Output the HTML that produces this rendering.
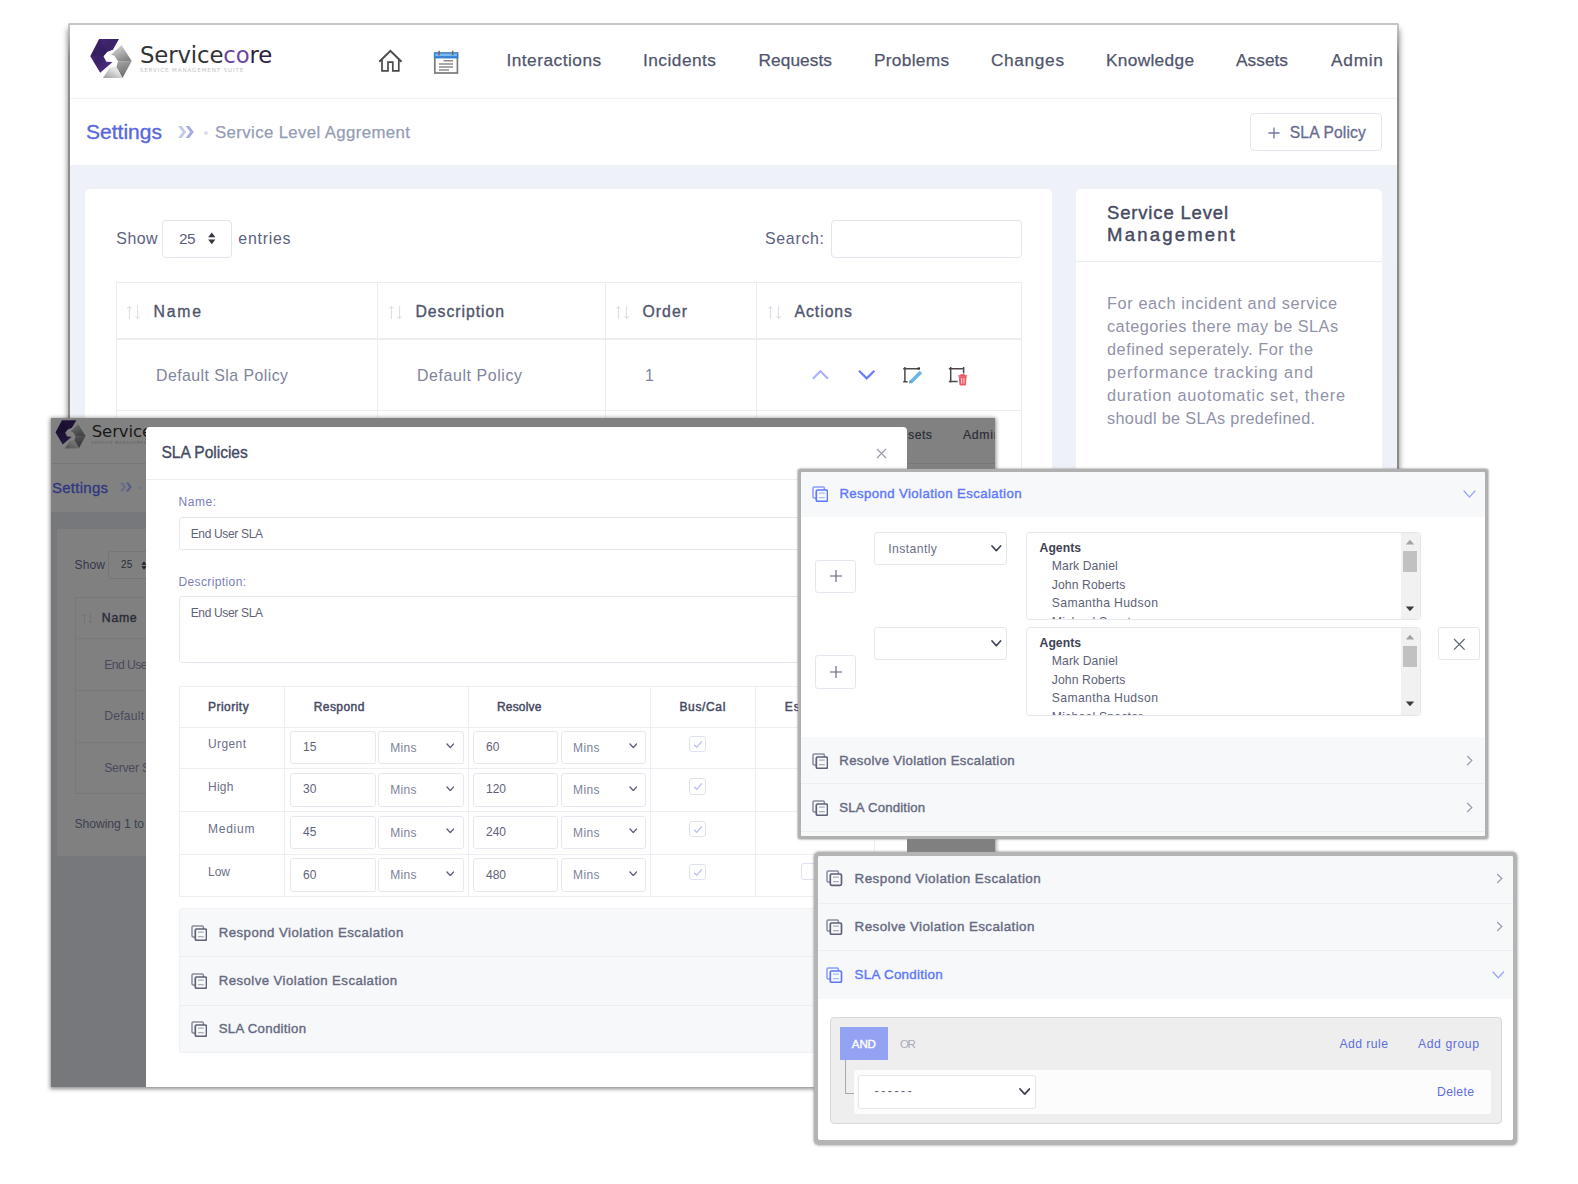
<!DOCTYPE html>
<html lang="en"><head><meta charset="utf-8"><title>Servicecore - SLA Policies</title>
<style>
html,body{margin:0;padding:0;background:#fff;}
body{width:1578px;height:1184px;position:relative;overflow:hidden;font-family:"Liberation Sans",sans-serif;}
#root{position:absolute;left:0;top:0;width:1578px;height:1184px;}
.b{position:absolute;box-sizing:border-box;}
.t{position:absolute;white-space:pre;}
</style></head>
<body>
<div id="root">
<div class="b" style="left:69.3px;top:23.7px;width:1328.5px;height:456.3px;background:#fff;box-shadow:0 6px 6px 1px rgba(0,0,0,.5);"></div>
<div class="b" style="left:68.3px;top:22.7px;width:1330.5px;height:457.3px;background:#c6c6c6;border-radius:1.5px;"></div>
<div class="b" style="left:68.3px;top:24.2px;width:2.0px;height:455.8px;background:linear-gradient(#c6c6c6 0,#8e8e8e 34px,#8a8a8a 100%);"></div>
<div class="b" style="left:1396.8px;top:24.2px;width:2.0px;height:455.8px;background:linear-gradient(#c6c6c6 0,#8e8e8e 34px,#8a8a8a 100%);"></div>
<div class="b" style="left:70px;top:25px;width:1327px;height:455px;background:#fff;overflow:hidden;">
<div class="b" style="left:0.0px;top:73.0px;width:1328.0px;height:1.0px;background:#eef0f6;"></div>
<svg class="b" style="left:14.0px;top:7.0px;width:60.0px;height:52.0px;" viewBox="0 0 60 52"><defs><linearGradient id="lpa" x1="0" y1="0" x2="1" y2="1"><stop offset="0" stop-color="#4a2a80"/><stop offset=".45" stop-color="#3a2266"/><stop offset="1" stop-color="#62389e"/></linearGradient><linearGradient id="lqa" x1="1" y1="0" x2="0" y2="1"><stop offset="0" stop-color="#4b2a80" stop-opacity=".0"/><stop offset="1" stop-color="#4b2a80" stop-opacity="0"/></linearGradient><linearGradient id="lta" x1="0" y1="0" x2=".6" y2="1"><stop offset="0" stop-color="#e4e4e4"/><stop offset="1" stop-color="#858585"/></linearGradient><linearGradient id="lra" x1="0" y1="0" x2=".3" y2="1"><stop offset="0" stop-color="#a6a6a6"/><stop offset="1" stop-color="#6e6e6e"/></linearGradient><linearGradient id="lba" x1="0" y1="1" x2="1" y2="0"><stop offset="0" stop-color="#9c9c9c"/><stop offset=".7" stop-color="#e6e6e6"/><stop offset="1" stop-color="#cfcfcf"/></linearGradient></defs><path d="M15.2 7.1H35L28.9 17.7 23.1 20 19.5 24.3 22.3 29.7 28.6 29.9 16.2 40.8 6.3 24.3z" fill="url(#lpa)"/><path d="M15.2 7.1 23.1 20 19.5 24.3 6.3 24.3z" fill="#2e1a55" opacity=".45"/><path d="M37.5 12.9 47.7 28.9 34 29.3 30.4 23.8 26.9 22.8z" fill="url(#lta)"/><path d="M47.7 28.9 38.5 45.9 32.4 35 34 29.3z" fill="url(#lra)"/><path d="M32.4 35 38.5 45.9 19 46.1 25.9 35.5z" fill="url(#lba)"/></svg>
<span class="t" style="font-family:'DejaVu Sans',sans-serif;left:70.0px;top:19.1px;font-size:22.8px;line-height:22.8px;letter-spacing:-0.14px;color:#333333;">Service<span style="color:#6a45a3">co</span><span style="color:#2b2340">re</span></span>
<span class="t" style="font-family:'DejaVu Sans',sans-serif;left:69.8px;top:43.2px;font-size:5.6px;line-height:5.6px;letter-spacing:0.86px;color:#c4c4c4;">SERVICE MANAGEMENT SUITE</span>
<svg class="b" style="left:308.0px;top:23.5px;width:25.0px;height:24.0px;" viewBox="0 0 25 24"><path d="M4 10.6V21.8h6V13.2h4.8v8.6h6V10.6" fill="none" stroke="#4a4a4a" stroke-width="1.7"/><path d="M1.3 12.8 12.4 1.8l11.1 11" fill="none" stroke="#4a4a4a" stroke-width="2"/></svg>
<svg class="b" style="left:363.0px;top:25.0px;width:26.0px;height:24.0px;" viewBox="0 0 26 24"><rect x="1.8" y="3.2" width="22.6" height="19.8" fill="#fff" stroke="#7a7a7a" stroke-width="1.7"/><rect x="0.9" y="2.4" width="24.4" height="6" fill="#2f7fd0"/><rect x="2.2" y="3.6" width="21.8" height="2.6" fill="#7db8f0"/><path d="M6.1 .8v4.4M19.7 .8v4.4" stroke="#6a6a6a" stroke-width="1.5"/><path d="M10.5 10.8H20M6 14h14M6 16.9h14M6 19.9h10" stroke="#8c8c8c" stroke-width="1.5"/></svg>
<span class="t " style="left:436.4px;top:26.7px;font-size:17.3px;line-height:17.3px;color:#50556e;letter-spacing:0.50px;-webkit-text-stroke:0.25px #50556e;">Interactions</span>
<span class="t " style="left:573.0px;top:26.7px;font-size:17.3px;line-height:17.3px;color:#50556e;letter-spacing:0.48px;-webkit-text-stroke:0.25px #50556e;">Incidents</span>
<span class="t " style="left:688.5px;top:26.7px;font-size:17.3px;line-height:17.3px;color:#50556e;letter-spacing:0.07px;-webkit-text-stroke:0.25px #50556e;">Requests</span>
<span class="t " style="left:804.0px;top:26.7px;font-size:17.3px;line-height:17.3px;color:#50556e;letter-spacing:0.29px;-webkit-text-stroke:0.25px #50556e;">Problems</span>
<span class="t " style="left:921.0px;top:26.7px;font-size:17.3px;line-height:17.3px;color:#50556e;letter-spacing:0.64px;-webkit-text-stroke:0.25px #50556e;">Changes</span>
<span class="t " style="left:1036.0px;top:26.7px;font-size:17.3px;line-height:17.3px;color:#50556e;letter-spacing:0.31px;-webkit-text-stroke:0.25px #50556e;">Knowledge</span>
<span class="t " style="left:1166.0px;top:26.7px;font-size:17.3px;line-height:17.3px;color:#50556e;letter-spacing:0.03px;-webkit-text-stroke:0.25px #50556e;">Assets</span>
<span class="t " style="left:1261.0px;top:26.7px;font-size:17.3px;line-height:17.3px;color:#50556e;letter-spacing:0.75px;-webkit-text-stroke:0.25px #50556e;">Admin</span>
<span class="t " style="left:16.0px;top:96.2px;font-size:21px;line-height:21px;color:#5867dd;letter-spacing:0.02px;-webkit-text-stroke:0.35px #5867dd;">Settings</span>
<svg class="b" style="left:107.0px;top:99.0px;width:18.0px;height:16.0px;" viewBox="0 0 18 16"><path d="M1 2l4.6 6L1 14h3.6l4.6-6-4.6-6z" fill="#c3c9e8"/><path d="M8.6 2l4.6 6-4.6 6h3.6l4.6-6-4.6-6z" fill="#a3abe0"/></svg>
<div class="b" style="left:134.0px;top:105.5px;width:4.0px;height:4.0px;background:#dcdfee;border-radius:2px;"></div>
<span class="t " style="left:145.0px;top:100.2px;font-size:16.8px;line-height:16.8px;color:#959cb6;letter-spacing:0.38px;-webkit-text-stroke:0.25px #959cb6;">Service Level Aggrement</span>
<div class="b" style="left:1180.0px;top:88.0px;width:132.0px;height:38.0px;background:#fff;border:1px solid #e2e5ec;border-radius:4px;"></div>
<svg class="b" style="left:1198.0px;top:101.6px;width:12.0px;height:12.0px;" viewBox="0 0 12 12"><path d="M6 .4v11.2M.4 6h11.2" stroke="#7177a0" stroke-width="1.3" fill="none"/></svg>
<span class="t " style="left:1219.8px;top:99.9px;font-size:15.6px;line-height:15.6px;color:#666c8e;letter-spacing:0.16px;-webkit-text-stroke:0.3px #666c8e;">SLA Policy</span>
<div class="b" style="left:0.0px;top:140.0px;width:1328.0px;height:315.0px;background:#eff1f8;"></div>
<div class="b" style="left:15.0px;top:164.0px;width:967.0px;height:311.0px;background:#fff;border-radius:5px;"></div>
<span class="t " style="left:46.3px;top:205.9px;font-size:15.9px;line-height:15.9px;color:#5c6180;letter-spacing:0.48px;">Show</span>
<div class="b" style="left:92.3px;top:194.8px;width:70.2px;height:37.8px;background:#fff;border:1px solid #e2e5ec;border-radius:4px;"></div>
<span class="t " style="left:109.1px;top:206.0px;font-size:15.4px;line-height:15.4px;color:#5c6180;letter-spacing:-0.62px;">25</span>
<svg class="b" style="left:137.0px;top:207.2px;width:9.5px;height:12.8px;" viewBox="0 0 8 12"><path d="M4 0.5 7.4 5H.6zM4 11.5.6 7h6.8z" fill="#343a40"/></svg>
<span class="t " style="left:168.3px;top:205.9px;font-size:15.9px;line-height:15.9px;color:#5c6180;letter-spacing:0.75px;">entries</span>
<span class="t " style="left:695.0px;top:205.9px;font-size:15.9px;line-height:15.9px;color:#5c6180;letter-spacing:0.71px;">Search:</span>
<div class="b" style="left:761.0px;top:194.8px;width:191.0px;height:37.8px;background:#fff;border:1px solid #e2e5ec;border-radius:4px;"></div>
<div class="b" style="left:46.0px;top:257.0px;width:906.0px;height:218.0px;border:1px solid #ebedf2;"></div>
<div class="b" style="left:46.0px;top:313.0px;width:906.0px;height:2.0px;background:#ebedf2;"></div>
<div class="b" style="left:46.0px;top:385.0px;width:906.0px;height:1.0px;background:#ebedf2;"></div>
<div class="b" style="left:307.0px;top:257.0px;width:1.0px;height:218.0px;background:#ebedf2;"></div>
<div class="b" style="left:535.0px;top:257.0px;width:1.0px;height:218.0px;background:#ebedf2;"></div>
<div class="b" style="left:686.0px;top:257.0px;width:1.0px;height:218.0px;background:#ebedf2;"></div>
<span class="t " style="left:83.5px;top:278.5px;font-size:15.8px;line-height:15.8px;color:#50556e;letter-spacing:1.79px;-webkit-text-stroke:0.35px #50556e;">Name</span>
<svg class="b" style="left:55.5px;top:280.2px;width:16.0px;height:15.0px;" viewBox="0 0 16 15"><path d="M3.4 14V1.4M1.2 3.8 3.4 1.4 5.6 3.8M11.6 1V13.6M9.4 11.2l2.2 2.4 2.2-2.4" fill="none" stroke="#dadce6" stroke-width="1"/></svg>
<span class="t " style="left:345.5px;top:278.5px;font-size:15.8px;line-height:15.8px;color:#50556e;letter-spacing:0.95px;-webkit-text-stroke:0.35px #50556e;">Description</span>
<svg class="b" style="left:317.5px;top:280.2px;width:16.0px;height:15.0px;" viewBox="0 0 16 15"><path d="M3.4 14V1.4M1.2 3.8 3.4 1.4 5.6 3.8M11.6 1V13.6M9.4 11.2l2.2 2.4 2.2-2.4" fill="none" stroke="#dadce6" stroke-width="1"/></svg>
<span class="t " style="left:572.5px;top:278.5px;font-size:15.8px;line-height:15.8px;color:#50556e;letter-spacing:1.03px;-webkit-text-stroke:0.35px #50556e;">Order</span>
<svg class="b" style="left:544.5px;top:280.2px;width:16.0px;height:15.0px;" viewBox="0 0 16 15"><path d="M3.4 14V1.4M1.2 3.8 3.4 1.4 5.6 3.8M11.6 1V13.6M9.4 11.2l2.2 2.4 2.2-2.4" fill="none" stroke="#dadce6" stroke-width="1"/></svg>
<span class="t " style="left:724.5px;top:278.5px;font-size:15.8px;line-height:15.8px;color:#50556e;letter-spacing:0.95px;-webkit-text-stroke:0.35px #50556e;">Actions</span>
<svg class="b" style="left:696.5px;top:280.2px;width:16.0px;height:15.0px;" viewBox="0 0 16 15"><path d="M3.4 14V1.4M1.2 3.8 3.4 1.4 5.6 3.8M11.6 1V13.6M9.4 11.2l2.2 2.4 2.2-2.4" fill="none" stroke="#dadce6" stroke-width="1"/></svg>
<span class="t " style="left:86.0px;top:342.9px;font-size:15.9px;line-height:15.9px;color:#80849c;letter-spacing:0.44px;">Default Sla Policy</span>
<span class="t " style="left:347.0px;top:342.9px;font-size:15.9px;line-height:15.9px;color:#80849c;letter-spacing:0.60px;">Default Policy</span>
<span class="t " style="left:575.0px;top:342.9px;font-size:15.9px;line-height:15.9px;color:#80849c;">1</span>
<svg class="b" style="left:741.0px;top:344.0px;width:19.0px;height:12.0px;" viewBox="0 0 19 12"><path d="M1.8 9.8 9.4 2.2 17 9.8" fill="none" stroke="#a5b1ff" stroke-width="2"/></svg>
<svg class="b" style="left:787.0px;top:344.0px;width:19.0px;height:12.0px;" viewBox="0 0 19 12"><path d="M2 1.8 9.7 9.4 17.4 1.8" fill="none" stroke="#6c7dff" stroke-width="2.3"/></svg>
<svg class="b" style="left:832.0px;top:340.0px;width:22.0px;height:22.0px;" viewBox="0 0 22 22"><path d="M2.9 2V17.4M1.2 3.7H16.8M1.2 16.7H5.6" fill="none" stroke="#4a4a4a" stroke-width="1.5"/><rect x="15.6" y="2.4" width="2.4" height="2.2" fill="#333"/><path d="M18.9 7.1 8.4 17.6" stroke="#6db3e6" stroke-width="3.6" fill="none"/><path d="M9.9 16.4 7 19l.6-3.6z" fill="#4b95d3"/></svg>
<svg class="b" style="left:877.0px;top:340.0px;width:22.0px;height:22.0px;" viewBox="0 0 22 22"><path d="M3.7 2V17.4M1.8 3.7H17.2M16.6 2V8.6M1.8 16.6H10.6" fill="none" stroke="#4a4a4a" stroke-width="1.5"/><path d="M11.2 10.9h9M14 10.6V9.7h3.4v.9" stroke="#e8505a" stroke-width="1.1" fill="none"/><path d="M12.3 11.8l.7 8.2h5.4l.7-8.2z" fill="#f0646c" stroke="#e8505a" stroke-width=".9"/><path d="M14.6 13v5.6M16.9 13v5.6" stroke="#fbd0d2" stroke-width=".9"/></svg>
<div class="b" style="left:1006.0px;top:164.0px;width:306.0px;height:311.0px;background:#fff;border-radius:5px;"></div>
<span class="t " style="left:1037.0px;top:179.0px;font-size:18.5px;line-height:18.5px;color:#464a63;letter-spacing:0.83px;-webkit-text-stroke:0.4px #464a63;">Service Level</span>
<span class="t " style="left:1037.0px;top:201.0px;font-size:18.5px;line-height:18.5px;color:#464a63;letter-spacing:2.22px;-webkit-text-stroke:0.4px #464a63;">Management</span>
<div class="b" style="left:1006.0px;top:236.0px;width:306.0px;height:1.0px;background:#ebedf2;"></div>
<span class="t " style="left:1037.0px;top:269.6px;font-size:16.3px;line-height:16.3px;color:#9193a8;letter-spacing:0.62px;">For each incident and service</span>
<span class="t " style="left:1037.0px;top:292.6px;font-size:16.3px;line-height:16.3px;color:#9193a8;letter-spacing:0.48px;">categories there may be SLAs</span>
<span class="t " style="left:1037.0px;top:315.6px;font-size:16.3px;line-height:16.3px;color:#9193a8;letter-spacing:0.52px;">defined seperately. For the</span>
<span class="t " style="left:1037.0px;top:338.6px;font-size:16.3px;line-height:16.3px;color:#9193a8;letter-spacing:0.93px;">performance tracking and</span>
<span class="t " style="left:1037.0px;top:361.6px;font-size:16.3px;line-height:16.3px;color:#9193a8;letter-spacing:0.78px;">duration auotomatic set, there</span>
<span class="t " style="left:1037.0px;top:384.6px;font-size:16.3px;line-height:16.3px;color:#9193a8;letter-spacing:0.32px;">shoudl be SLAs predefined.</span>
</div>
<div class="b" style="left:51.0px;top:418.0px;width:944.0px;height:669.0px;background:#808080;box-shadow:0 1px 4px 1px rgba(0,0,0,.45);"></div>
<div class="b" style="left:51px;top:418px;width:944px;height:669px;background:#818181;overflow:hidden;">
<div class="b" style="left:0.0px;top:45.0px;width:944.0px;height:1.0px;background:#787878;"></div>
<div class="b" style="left:0.0px;top:94.0px;width:944.0px;height:575.0px;background:#77787c;"></div>
<div class="b" style="left:6.0px;top:111.0px;width:938.0px;height:327.0px;background:#808080;"></div>
<svg class="b" style="left:0.1px;top:-2.9px;width:43.5px;height:37.7px;" viewBox="0 0 60 52"><defs><linearGradient id="lpb" x1="0" y1="0" x2="1" y2="1"><stop offset="0" stop-color="#251540"/><stop offset=".45" stop-color="#1d1133"/><stop offset="1" stop-color="#311c4f"/></linearGradient><linearGradient id="lqb" x1="1" y1="0" x2="0" y2="1"><stop offset="0" stop-color="#251540" stop-opacity=".0"/><stop offset="1" stop-color="#251540" stop-opacity="0"/></linearGradient><linearGradient id="ltb" x1="0" y1="0" x2=".6" y2="1"><stop offset="0" stop-color="#727272"/><stop offset="1" stop-color="#424242"/></linearGradient><linearGradient id="lrb" x1="0" y1="0" x2=".3" y2="1"><stop offset="0" stop-color="#535353"/><stop offset="1" stop-color="#373737"/></linearGradient><linearGradient id="lbb" x1="0" y1="1" x2="1" y2="0"><stop offset="0" stop-color="#4e4e4e"/><stop offset=".7" stop-color="#737373"/><stop offset="1" stop-color="#676767"/></linearGradient></defs><path d="M15.2 7.1H35L28.9 17.7 23.1 20 19.5 24.3 22.3 29.7 28.6 29.9 16.2 40.8 6.3 24.3z" fill="url(#lpb)"/><path d="M15.2 7.1 23.1 20 19.5 24.3 6.3 24.3z" fill="#170d2a" opacity=".45"/><path d="M37.5 12.9 47.7 28.9 34 29.3 30.4 23.8 26.9 22.8z" fill="url(#ltb)"/><path d="M47.7 28.9 38.5 45.9 32.4 35 34 29.3z" fill="url(#lrb)"/><path d="M32.4 35 38.5 45.9 19 46.1 25.9 35.5z" fill="url(#lbb)"/></svg>
<span class="t" style="font-family:'DejaVu Sans',sans-serif;left:40.7px;top:5.8px;font-size:16.53px;line-height:16.53px;letter-spacing:-0.10px;color:#191919;">Service<span style="color:#352251">co</span><span style="color:#151120">re</span></span>
<span class="t" style="font-family:'DejaVu Sans',sans-serif;left:40.6px;top:23.3px;font-size:4.06px;line-height:4.06px;letter-spacing:0.63px;color:#626262;">SERVICE MANAGEMENT SUITE</span>
<span class="t " style="left:1.0px;top:61.7px;font-size:15px;line-height:15px;color:#2f3780;letter-spacing:0.26px;-webkit-text-stroke:0.3px #2f3780;">Settings</span>
<svg class="b" style="left:68.0px;top:63.0px;width:14.0px;height:12.0px;" viewBox="0 0 18 16"><path d="M1 2l4.6 6L1 14h3.6l4.6-6-4.6-6z" fill="#666c8a"/><path d="M8.6 2l4.6 6-4.6 6h3.6l4.6-6-4.6-6z" fill="#565d88"/></svg>
<div class="b" style="left:88.0px;top:68.0px;width:3.0px;height:3.0px;background:#74767f;border-radius:2px;"></div>
<span class="t " style="left:857.0px;top:11.0px;font-size:12.3px;line-height:12.3px;color:#2b2d3a;letter-spacing:0.48px;-webkit-text-stroke:0.2px #2b2d3a;">sets</span>
<span class="t " style="left:912.0px;top:11.0px;font-size:12.3px;line-height:12.3px;color:#2b2d3a;letter-spacing:0.66px;-webkit-text-stroke:0.2px #2b2d3a;">Admin</span>
<span class="t " style="left:23.6px;top:141.1px;font-size:12px;line-height:12px;color:#34374a;letter-spacing:0.12px;">Show</span>
<div class="b" style="left:57.0px;top:133.0px;width:52.0px;height:28.0px;background:#808080;border:1px solid #767676;border-radius:3px;"></div>
<span class="t " style="left:70.0px;top:142.1px;font-size:10px;line-height:10px;color:#2b2d3a;letter-spacing:0.18px;">25</span>
<svg class="b" style="left:90.0px;top:143.0px;width:6.0px;height:9.0px;" viewBox="0 0 8 12"><path d="M4 0.5 7.4 5H.6zM4 11.5.6 7h6.8z" fill="#1c1e22"/></svg>
<div class="b" style="left:23.6px;top:179.0px;width:325.4px;height:196.5px;border:1px solid #787879;"></div>
<div class="b" style="left:23.6px;top:219.5px;width:325.4px;height:1.5px;background:#787879;"></div>
<div class="b" style="left:23.6px;top:272.0px;width:325.4px;height:1.0px;background:#787879;"></div>
<div class="b" style="left:23.6px;top:323.5px;width:325.4px;height:1.0px;background:#787879;"></div>
<svg class="b" style="left:30.6px;top:195.0px;width:11.5px;height:10.8px;" viewBox="0 0 16 15"><path d="M3.4 14V1.4M1.2 3.8 3.4 1.4 5.6 3.8M11.6 1V13.6M9.4 11.2l2.2 2.4 2.2-2.4" fill="none" stroke="#6e7079" stroke-width="1"/></svg>
<span class="t " style="left:50.8px;top:194.2px;font-size:12.3px;line-height:12.3px;color:#2b2d3a;letter-spacing:0.70px;-webkit-text-stroke:0.4px #2b2d3a;">Name</span>
<span class="t " style="left:53.2px;top:241.0px;font-size:12.2px;line-height:12.2px;color:#484a5c;letter-spacing:-0.56px;">End User SLA</span>
<span class="t " style="left:53.2px;top:292.2px;font-size:12.2px;line-height:12.2px;color:#484a5c;letter-spacing:0.21px;">Default Sla Policy</span>
<span class="t " style="left:53.2px;top:344.0px;font-size:12.2px;line-height:12.2px;color:#484a5c;letter-spacing:-0.22px;">Server Sla Policy</span>
<span class="t " style="left:23.6px;top:399.8px;font-size:12.2px;line-height:12.2px;color:#3e4052;letter-spacing:-0.10px;">Showing 1 to 3 of 3 entries</span>
<div class="b" style="left:95.3px;top:8.5px;width:760.7px;height:673.5px;background:#fff;border-radius:4px;"></div>
<span class="t " style="left:110.5px;top:26.7px;font-size:15.6px;line-height:15.6px;color:#464a63;letter-spacing:-0.04px;-webkit-text-stroke:0.35px #464a63;">SLA Policies</span>
<svg class="b" style="left:825.0px;top:30.0px;width:11.0px;height:11.0px;" viewBox="0 0 11 11"><path d="M1 1l9 9M10 1l-9 9" stroke="#9a9cae" stroke-width="1.2" fill="none"/></svg>
<div class="b" style="left:95.3px;top:60.5px;width:760.7px;height:1.0px;background:#ebedf2;"></div>
<span class="t " style="left:127.5px;top:78.2px;font-size:12px;line-height:12px;color:#7a7fb8;letter-spacing:0.54px;">Name:</span>
<div class="b" style="left:127.8px;top:99.0px;width:696.2px;height:33.3px;background:#fff;border:1px solid #e6e8f0;border-radius:3px;"></div>
<span class="t " style="left:139.7px;top:109.5px;font-size:12px;line-height:12px;color:#5f6379;letter-spacing:-0.34px;">End User SLA</span>
<span class="t " style="left:127.5px;top:157.7px;font-size:12px;line-height:12px;color:#7a7fb8;letter-spacing:0.38px;">Description:</span>
<div class="b" style="left:127.8px;top:178.0px;width:696.2px;height:67.0px;background:#fff;border:1px solid #e6e8f0;border-radius:3px;"></div>
<span class="t " style="left:139.7px;top:188.9px;font-size:12px;line-height:12px;color:#5f6379;letter-spacing:-0.34px;">End User SLA</span>
<div class="b" style="left:128.0px;top:267.5px;width:696.0px;height:211.8px;border:1px solid #eeeff5;"></div>
<div class="b" style="left:128.0px;top:308.5px;width:696.0px;height:1.0px;background:#eeeff5;"></div>
<div class="b" style="left:128.0px;top:350.3px;width:696.0px;height:1.0px;background:#eeeff5;"></div>
<div class="b" style="left:128.0px;top:393.0px;width:696.0px;height:1.0px;background:#eeeff5;"></div>
<div class="b" style="left:128.0px;top:435.6px;width:696.0px;height:1.0px;background:#eeeff5;"></div>
<div class="b" style="left:233.0px;top:267.5px;width:1.0px;height:211.5px;background:#eeeff5;"></div>
<div class="b" style="left:416.5px;top:267.5px;width:1.0px;height:211.5px;background:#eeeff5;"></div>
<div class="b" style="left:598.7px;top:267.5px;width:1.0px;height:211.5px;background:#eeeff5;"></div>
<div class="b" style="left:704.0px;top:267.5px;width:1.0px;height:211.5px;background:#eeeff5;"></div>
<span class="t " style="left:157.0px;top:282.7px;font-size:12px;line-height:12px;color:#464a63;letter-spacing:0.47px;-webkit-text-stroke:0.45px #464a63;">Priority</span>
<span class="t " style="left:262.7px;top:282.7px;font-size:12px;line-height:12px;color:#464a63;letter-spacing:0.44px;-webkit-text-stroke:0.45px #464a63;">Respond</span>
<span class="t " style="left:446.0px;top:282.7px;font-size:12px;line-height:12px;color:#464a63;letter-spacing:0.17px;-webkit-text-stroke:0.45px #464a63;">Resolve</span>
<span class="t " style="left:628.4px;top:282.7px;font-size:12px;line-height:12px;color:#464a63;letter-spacing:0.66px;-webkit-text-stroke:0.45px #464a63;">Bus/Cal</span>
<span class="t " style="left:733.7px;top:282.7px;font-size:12px;line-height:12px;color:#464a63;letter-spacing:1.10px;-webkit-text-stroke:0.45px #464a63;">Escalation</span>
<span class="t " style="left:157.0px;top:320.1px;font-size:12px;line-height:12px;color:#6c7087;letter-spacing:0.39px;">Urgent</span>
<div class="b" style="left:239.4px;top:312.7px;width:85.4px;height:33.6px;background:#fff;border:1px solid #e6e8f0;border-radius:3px;"></div>
<span class="t " style="left:252.0px;top:323.0px;font-size:12px;line-height:12px;color:#5f6379;">15</span>
<div class="b" style="left:422.4px;top:312.7px;width:84.9px;height:33.6px;background:#fff;border:1px solid #e6e8f0;border-radius:3px;"></div>
<span class="t " style="left:435.0px;top:323.0px;font-size:12px;line-height:12px;color:#5f6379;">60</span>
<div class="b" style="left:327.4px;top:312.7px;width:86.1px;height:33.6px;background:#fff;border:1px solid #e6e8f0;border-radius:3px;"></div>
<span class="t " style="left:339.2px;top:323.8px;font-size:12px;line-height:12px;color:#7e8299;letter-spacing:0.35px;">Mins</span>
<svg class="b" style="left:394.9px;top:325.2px;width:8.6px;height:5.6px;" viewBox="0 0 8.60 5.63"><path d="M1 1 4.30 4.63 7.60 1" fill="none" stroke="#5e6278" stroke-width="1.4" stroke-linecap="round" stroke-linejoin="round"/></svg>
<div class="b" style="left:510.3px;top:312.7px;width:85.2px;height:33.6px;background:#fff;border:1px solid #e6e8f0;border-radius:3px;"></div>
<span class="t " style="left:522.1px;top:323.8px;font-size:12px;line-height:12px;color:#7e8299;letter-spacing:0.35px;">Mins</span>
<svg class="b" style="left:577.8px;top:325.2px;width:8.6px;height:5.6px;" viewBox="0 0 8.60 5.63"><path d="M1 1 4.30 4.63 7.60 1" fill="none" stroke="#5e6278" stroke-width="1.4" stroke-linecap="round" stroke-linejoin="round"/></svg>
<div class="b" style="left:638.2px;top:318.1px;width:16.4px;height:16.4px;background:#fff;border:1px solid #dfe2ee;border-radius:3px;"></div>
<svg class="b" style="left:641.5px;top:322.1px;width:10.0px;height:9.0px;" viewBox="0 0 10 9"><path d="M1.2 4.8 3.8 7.4 8.8 1.4" fill="none" stroke="#b6c0f0" stroke-width="1.3"/></svg>
<span class="t " style="left:157.0px;top:362.6px;font-size:12px;line-height:12px;color:#6c7087;letter-spacing:0.24px;">High</span>
<div class="b" style="left:239.4px;top:355.0px;width:85.4px;height:33.6px;background:#fff;border:1px solid #e6e8f0;border-radius:3px;"></div>
<span class="t " style="left:252.0px;top:365.3px;font-size:12px;line-height:12px;color:#5f6379;">30</span>
<div class="b" style="left:422.4px;top:355.0px;width:84.9px;height:33.6px;background:#fff;border:1px solid #e6e8f0;border-radius:3px;"></div>
<span class="t " style="left:435.0px;top:365.3px;font-size:12px;line-height:12px;color:#5f6379;">120</span>
<div class="b" style="left:327.4px;top:355.0px;width:86.1px;height:33.6px;background:#fff;border:1px solid #e6e8f0;border-radius:3px;"></div>
<span class="t " style="left:339.2px;top:366.1px;font-size:12px;line-height:12px;color:#7e8299;letter-spacing:0.35px;">Mins</span>
<svg class="b" style="left:394.9px;top:367.5px;width:8.6px;height:5.6px;" viewBox="0 0 8.60 5.63"><path d="M1 1 4.30 4.63 7.60 1" fill="none" stroke="#5e6278" stroke-width="1.4" stroke-linecap="round" stroke-linejoin="round"/></svg>
<div class="b" style="left:510.3px;top:355.0px;width:85.2px;height:33.6px;background:#fff;border:1px solid #e6e8f0;border-radius:3px;"></div>
<span class="t " style="left:522.1px;top:366.1px;font-size:12px;line-height:12px;color:#7e8299;letter-spacing:0.35px;">Mins</span>
<svg class="b" style="left:577.8px;top:367.5px;width:8.6px;height:5.6px;" viewBox="0 0 8.60 5.63"><path d="M1 1 4.30 4.63 7.60 1" fill="none" stroke="#5e6278" stroke-width="1.4" stroke-linecap="round" stroke-linejoin="round"/></svg>
<div class="b" style="left:638.2px;top:360.4px;width:16.4px;height:16.4px;background:#fff;border:1px solid #dfe2ee;border-radius:3px;"></div>
<svg class="b" style="left:641.5px;top:364.4px;width:10.0px;height:9.0px;" viewBox="0 0 10 9"><path d="M1.2 4.8 3.8 7.4 8.8 1.4" fill="none" stroke="#b6c0f0" stroke-width="1.3"/></svg>
<span class="t " style="left:157.0px;top:405.0px;font-size:12px;line-height:12px;color:#6c7087;letter-spacing:0.74px;">Medium</span>
<div class="b" style="left:239.4px;top:397.6px;width:85.4px;height:33.6px;background:#fff;border:1px solid #e6e8f0;border-radius:3px;"></div>
<span class="t " style="left:252.0px;top:407.9px;font-size:12px;line-height:12px;color:#5f6379;">45</span>
<div class="b" style="left:422.4px;top:397.6px;width:84.9px;height:33.6px;background:#fff;border:1px solid #e6e8f0;border-radius:3px;"></div>
<span class="t " style="left:435.0px;top:407.9px;font-size:12px;line-height:12px;color:#5f6379;">240</span>
<div class="b" style="left:327.4px;top:397.6px;width:86.1px;height:33.6px;background:#fff;border:1px solid #e6e8f0;border-radius:3px;"></div>
<span class="t " style="left:339.2px;top:408.7px;font-size:12px;line-height:12px;color:#7e8299;letter-spacing:0.35px;">Mins</span>
<svg class="b" style="left:394.9px;top:410.1px;width:8.6px;height:5.6px;" viewBox="0 0 8.60 5.63"><path d="M1 1 4.30 4.63 7.60 1" fill="none" stroke="#5e6278" stroke-width="1.4" stroke-linecap="round" stroke-linejoin="round"/></svg>
<div class="b" style="left:510.3px;top:397.6px;width:85.2px;height:33.6px;background:#fff;border:1px solid #e6e8f0;border-radius:3px;"></div>
<span class="t " style="left:522.1px;top:408.7px;font-size:12px;line-height:12px;color:#7e8299;letter-spacing:0.35px;">Mins</span>
<svg class="b" style="left:577.8px;top:410.1px;width:8.6px;height:5.6px;" viewBox="0 0 8.60 5.63"><path d="M1 1 4.30 4.63 7.60 1" fill="none" stroke="#5e6278" stroke-width="1.4" stroke-linecap="round" stroke-linejoin="round"/></svg>
<div class="b" style="left:638.2px;top:403.0px;width:16.4px;height:16.4px;background:#fff;border:1px solid #dfe2ee;border-radius:3px;"></div>
<svg class="b" style="left:641.5px;top:407.0px;width:10.0px;height:9.0px;" viewBox="0 0 10 9"><path d="M1.2 4.8 3.8 7.4 8.8 1.4" fill="none" stroke="#b6c0f0" stroke-width="1.3"/></svg>
<span class="t " style="left:157.0px;top:447.5px;font-size:12px;line-height:12px;color:#6c7087;letter-spacing:-0.01px;">Low</span>
<div class="b" style="left:239.4px;top:440.2px;width:85.4px;height:33.6px;background:#fff;border:1px solid #e6e8f0;border-radius:3px;"></div>
<span class="t " style="left:252.0px;top:450.5px;font-size:12px;line-height:12px;color:#5f6379;">60</span>
<div class="b" style="left:422.4px;top:440.2px;width:84.9px;height:33.6px;background:#fff;border:1px solid #e6e8f0;border-radius:3px;"></div>
<span class="t " style="left:435.0px;top:450.5px;font-size:12px;line-height:12px;color:#5f6379;">480</span>
<div class="b" style="left:327.4px;top:440.2px;width:86.1px;height:33.6px;background:#fff;border:1px solid #e6e8f0;border-radius:3px;"></div>
<span class="t " style="left:339.2px;top:451.3px;font-size:12px;line-height:12px;color:#7e8299;letter-spacing:0.35px;">Mins</span>
<svg class="b" style="left:394.9px;top:452.7px;width:8.6px;height:5.6px;" viewBox="0 0 8.60 5.63"><path d="M1 1 4.30 4.63 7.60 1" fill="none" stroke="#5e6278" stroke-width="1.4" stroke-linecap="round" stroke-linejoin="round"/></svg>
<div class="b" style="left:510.3px;top:440.2px;width:85.2px;height:33.6px;background:#fff;border:1px solid #e6e8f0;border-radius:3px;"></div>
<span class="t " style="left:522.1px;top:451.3px;font-size:12px;line-height:12px;color:#7e8299;letter-spacing:0.35px;">Mins</span>
<svg class="b" style="left:577.8px;top:452.7px;width:8.6px;height:5.6px;" viewBox="0 0 8.60 5.63"><path d="M1 1 4.30 4.63 7.60 1" fill="none" stroke="#5e6278" stroke-width="1.4" stroke-linecap="round" stroke-linejoin="round"/></svg>
<div class="b" style="left:638.2px;top:445.6px;width:16.4px;height:16.4px;background:#fff;border:1px solid #dfe2ee;border-radius:3px;"></div>
<svg class="b" style="left:641.5px;top:449.6px;width:10.0px;height:9.0px;" viewBox="0 0 10 9"><path d="M1.2 4.8 3.8 7.4 8.8 1.4" fill="none" stroke="#b6c0f0" stroke-width="1.3"/></svg>
<div class="b" style="left:750.4px;top:445.3px;width:16.6px;height:16.4px;background:#fff;border:1px solid #dfe2ee;border-radius:3px;"></div>
<div class="b" style="left:128.0px;top:490.0px;width:696.0px;height:144.5px;background:#f7f8fa;border:1px solid #f0f1f5;border-radius:3px;"></div>
<div class="b" style="left:128.0px;top:538.3px;width:696.0px;height:1.0px;background:#eceef3;"></div>
<div class="b" style="left:128.0px;top:586.5px;width:696.0px;height:1.0px;background:#eceef3;"></div>
<svg class="b" style="left:139.7px;top:506.6px;width:16.4px;height:16.4px;" viewBox="0 0 16.4 16.4"><rect x="1" y="1" width="11.4" height="11" rx="1.2" fill="none" stroke="#5e6278" stroke-width="1.5" opacity=".72"/><rect x="4.3" y="4" width="11.2" height="11.3" rx="1.3" fill="#f7f8fa" stroke="#5e6278" stroke-width="1.7"/><path d="M7 7.1h5.8M7 11.7h5.8" stroke="#5e6278" stroke-width="1.3" opacity=".5" fill="none"/></svg>
<span class="t " style="left:167.7px;top:508.2px;font-size:13.2px;line-height:13.2px;color:#676b82;letter-spacing:0.49px;-webkit-text-stroke:0.4px #676b82;">Respond Violation Escalation</span>
<svg class="b" style="left:139.7px;top:554.6px;width:16.4px;height:16.4px;" viewBox="0 0 16.4 16.4"><rect x="1" y="1" width="11.4" height="11" rx="1.2" fill="none" stroke="#5e6278" stroke-width="1.5" opacity=".72"/><rect x="4.3" y="4" width="11.2" height="11.3" rx="1.3" fill="#f7f8fa" stroke="#5e6278" stroke-width="1.7"/><path d="M7 7.1h5.8M7 11.7h5.8" stroke="#5e6278" stroke-width="1.3" opacity=".5" fill="none"/></svg>
<span class="t " style="left:167.7px;top:556.2px;font-size:13.2px;line-height:13.2px;color:#676b82;letter-spacing:0.45px;-webkit-text-stroke:0.4px #676b82;">Resolve Violation Escalation</span>
<svg class="b" style="left:139.7px;top:602.6px;width:16.4px;height:16.4px;" viewBox="0 0 16.4 16.4"><rect x="1" y="1" width="11.4" height="11" rx="1.2" fill="none" stroke="#5e6278" stroke-width="1.5" opacity=".72"/><rect x="4.3" y="4" width="11.2" height="11.3" rx="1.3" fill="#f7f8fa" stroke="#5e6278" stroke-width="1.7"/><path d="M7 7.1h5.8M7 11.7h5.8" stroke="#5e6278" stroke-width="1.3" opacity=".5" fill="none"/></svg>
<span class="t " style="left:167.7px;top:604.2px;font-size:13.2px;line-height:13.2px;color:#676b82;letter-spacing:0.31px;-webkit-text-stroke:0.4px #676b82;">SLA Condition</span>
</div>
<div class="b" style="left:798.0px;top:469.0px;width:690.0px;height:370.0px;background:#b0b0b0;border-radius:3px;box-shadow:0 0 1.5px .5px rgba(130,130,130,.45);"></div>
<div class="b" style="left:801px;top:472px;width:684px;height:364px;background:#fff;overflow:hidden;border-radius:1.5px;">
<div class="b" style="left:-1.0px;top:-1.0px;width:686.0px;height:46.0px;background:#f7f8fa;"></div>
<svg class="b" style="left:10.8px;top:13.9px;width:16.4px;height:16.4px;" viewBox="0 0 16.4 16.4"><rect x="1" y="1" width="11.4" height="11" rx="1.2" fill="none" stroke="#5d78ff" stroke-width="1.5" opacity=".72"/><rect x="4.3" y="4" width="11.2" height="11.3" rx="1.3" fill="#f7f8fa" stroke="#5d78ff" stroke-width="1.7"/><path d="M7 7.1h5.8M7 11.7h5.8" stroke="#5d78ff" stroke-width="1.3" opacity=".5" fill="none"/></svg>
<span class="t " style="left:38.4px;top:14.7px;font-size:13.2px;line-height:13.2px;color:#5d78ff;letter-spacing:0.40px;-webkit-text-stroke:0.4px #5d78ff;">Respond Violation Escalation</span>
<svg class="b" style="left:661.5px;top:17.5px;width:13.0px;height:8.1px;" viewBox="0 0 13.00 8.05"><path d="M1 1 6.50 7.05 12.00 1" fill="none" stroke="#8fa2ff" stroke-width="1.2" stroke-linecap="round" stroke-linejoin="round"/></svg>
<div class="b" style="left:14.3px;top:88.0px;width:41.0px;height:32.5px;background:#fff;border:1px solid #e5e7ef;border-radius:3px;"></div>
<svg class="b" style="left:27.6px;top:97.4px;width:14.0px;height:14.0px;" viewBox="0 0 14 14"><path d="M7 1v12M1 7h12" stroke="#5e6278" stroke-width="1.1" fill="none"/></svg>
<div class="b" style="left:72.6px;top:60.2px;width:133.8px;height:32.4px;background:#fff;border:1px solid #e5e7ef;border-radius:3px;"></div>
<span class="t " style="left:87.3px;top:70.8px;font-size:12.2px;line-height:12.2px;color:#6c7087;letter-spacing:0.41px;">Instantly</span>
<svg class="b" style="left:190.4px;top:73.3px;width:10.6px;height:6.7px;" viewBox="0 0 10.60 6.73"><path d="M1 1 5.30 5.73 9.60 1" fill="none" stroke="#3f4254" stroke-width="1.7" stroke-linecap="round" stroke-linejoin="round"/></svg>
<div class="b" style="left:224.7px;top:60.2px;width:394.9px;height:88.0px;background:#fff;border:1px solid #e5e7ef;border-radius:4px;"></div>
<div class="b" style="left:225.7px;top:61.2px;width:393px;height:86.0px;overflow:hidden;border-radius:3px;">
<span class="t " style="left:12.9px;top:8.8px;font-size:12.2px;line-height:12.2px;color:#3f4254;letter-spacing:0.02px;font-weight:700;">Agents</span>
<span class="t " style="left:25.1px;top:27.2px;font-size:12.2px;line-height:12.2px;color:#5e6278;letter-spacing:0.09px;">Mark Daniel</span>
<span class="t " style="left:25.1px;top:45.6px;font-size:12.2px;line-height:12.2px;color:#5e6278;letter-spacing:0.09px;">John Roberts</span>
<span class="t " style="left:25.1px;top:64.0px;font-size:12.2px;line-height:12.2px;color:#5e6278;letter-spacing:0.37px;">Samantha Hudson</span>
<span class="t " style="left:25.1px;top:82.4px;font-size:12.2px;line-height:12.2px;color:#5e6278;letter-spacing:0.22px;">Michael Spector</span>
<div class="b" style="left:374.8px;top:0.0px;width:18.2px;height:86.0px;background:#f1f1f1;"></div>
<div class="b" style="left:376.6px;top:18.3px;width:14.2px;height:20.3px;background:#c1c1c1;"></div>
<svg class="b" style="left:378.8px;top:6.3px;width:10.0px;height:6.0px;" viewBox="0 0 10 6"><path d="M5 .8 9.2 5.4H.8z" fill="#a3a3a3"/></svg>
<svg class="b" style="left:378.8px;top:73.3px;width:10.0px;height:6.0px;" viewBox="0 0 10 6"><path d="M5 5.2 9.2.6H.8z" fill="#3c3c3c"/></svg>
</div>
<div class="b" style="left:14.3px;top:183.0px;width:41.0px;height:33.5px;background:#fff;border:1px solid #e5e7ef;border-radius:3px;"></div>
<svg class="b" style="left:27.6px;top:192.8px;width:14.0px;height:14.0px;" viewBox="0 0 14 14"><path d="M7 1v12M1 7h12" stroke="#5e6278" stroke-width="1.1" fill="none"/></svg>
<div class="b" style="left:72.6px;top:155.2px;width:133.8px;height:32.4px;background:#fff;border:1px solid #e5e7ef;border-radius:3px;"></div>
<svg class="b" style="left:190.4px;top:168.3px;width:10.6px;height:6.7px;" viewBox="0 0 10.60 6.73"><path d="M1 1 5.30 5.73 9.60 1" fill="none" stroke="#3f4254" stroke-width="1.7" stroke-linecap="round" stroke-linejoin="round"/></svg>
<div class="b" style="left:224.7px;top:155.2px;width:394.9px;height:88.8px;background:#fff;border:1px solid #e5e7ef;border-radius:4px;"></div>
<div class="b" style="left:225.7px;top:156.2px;width:393px;height:86.8px;overflow:hidden;border-radius:3px;">
<span class="t " style="left:12.9px;top:8.9px;font-size:12.2px;line-height:12.2px;color:#3f4254;letter-spacing:0.02px;font-weight:700;">Agents</span>
<span class="t " style="left:25.1px;top:27.3px;font-size:12.2px;line-height:12.2px;color:#5e6278;letter-spacing:0.09px;">Mark Daniel</span>
<span class="t " style="left:25.1px;top:45.7px;font-size:12.2px;line-height:12.2px;color:#5e6278;letter-spacing:0.09px;">John Roberts</span>
<span class="t " style="left:25.1px;top:64.1px;font-size:12.2px;line-height:12.2px;color:#5e6278;letter-spacing:0.37px;">Samantha Hudson</span>
<span class="t " style="left:25.1px;top:82.5px;font-size:12.2px;line-height:12.2px;color:#5e6278;letter-spacing:0.22px;">Michael Spector</span>
<div class="b" style="left:374.8px;top:0.0px;width:18.2px;height:86.8px;background:#f1f1f1;"></div>
<div class="b" style="left:376.6px;top:18.3px;width:14.2px;height:20.3px;background:#c1c1c1;"></div>
<svg class="b" style="left:378.8px;top:6.3px;width:10.0px;height:6.0px;" viewBox="0 0 10 6"><path d="M5 .8 9.2 5.4H.8z" fill="#a3a3a3"/></svg>
<svg class="b" style="left:378.8px;top:73.3px;width:10.0px;height:6.0px;" viewBox="0 0 10 6"><path d="M5 5.2 9.2.6H.8z" fill="#3c3c3c"/></svg>
</div>
<div class="b" style="left:637.0px;top:155.2px;width:41.6px;height:33.0px;background:#fff;border:1px solid #e5e7ef;border-radius:3px;"></div>
<svg class="b" style="left:651.6px;top:165.5px;width:12.6px;height:12.6px;" viewBox="0 0 12.6 12.6"><path d="M1 1l10.6 10.6M11.6 1 1 11.6" stroke="#5e6278" stroke-width="1.2" fill="none"/></svg>
<div class="b" style="left:-1.0px;top:264.5px;width:686.0px;height:100.5px;background:#f7f8fa;"></div>
<div class="b" style="left:-1.0px;top:311.2px;width:686.0px;height:1.0px;background:#eceef3;"></div>
<div class="b" style="left:-1.0px;top:359.0px;width:686.0px;height:1.0px;background:#eceef3;"></div>
<svg class="b" style="left:10.9px;top:280.6px;width:16.4px;height:16.4px;" viewBox="0 0 16.4 16.4"><rect x="1" y="1" width="11.4" height="11" rx="1.2" fill="none" stroke="#5e6278" stroke-width="1.5" opacity=".72"/><rect x="4.3" y="4" width="11.2" height="11.3" rx="1.3" fill="#f7f8fa" stroke="#5e6278" stroke-width="1.7"/><path d="M7 7.1h5.8M7 11.7h5.8" stroke="#5e6278" stroke-width="1.3" opacity=".5" fill="none"/></svg>
<span class="t " style="left:38.3px;top:281.9px;font-size:13.2px;line-height:13.2px;color:#676b82;letter-spacing:0.34px;-webkit-text-stroke:0.4px #676b82;">Resolve Violation Escalation</span>
<svg class="b" style="left:664.5px;top:282.8px;width:7.0px;height:11.0px;" viewBox="0 0 7 11"><path d="M1.2 1 5.8 5.5 1.2 10" fill="none" stroke="#9a9cae" stroke-width="1.2"/></svg>
<svg class="b" style="left:10.9px;top:327.5px;width:16.4px;height:16.4px;" viewBox="0 0 16.4 16.4"><rect x="1" y="1" width="11.4" height="11" rx="1.2" fill="none" stroke="#5e6278" stroke-width="1.5" opacity=".72"/><rect x="4.3" y="4" width="11.2" height="11.3" rx="1.3" fill="#f7f8fa" stroke="#5e6278" stroke-width="1.7"/><path d="M7 7.1h5.8M7 11.7h5.8" stroke="#5e6278" stroke-width="1.3" opacity=".5" fill="none"/></svg>
<span class="t " style="left:38.3px;top:328.8px;font-size:13.2px;line-height:13.2px;color:#676b82;letter-spacing:0.19px;-webkit-text-stroke:0.4px #676b82;">SLA Condition</span>
<svg class="b" style="left:664.5px;top:329.7px;width:7.0px;height:11.0px;" viewBox="0 0 7 11"><path d="M1.2 1 5.8 5.5 1.2 10" fill="none" stroke="#9a9cae" stroke-width="1.2"/></svg>
</div>
<div class="b" style="left:813.5px;top:852.0px;width:703.5px;height:292.5px;background:#b4b4b4;border-radius:5px;box-shadow:0 0 2px 1px rgba(140,140,140,.5);"></div>
<div class="b" style="left:817.5px;top:855.5px;width:695.5px;height:284.0px;background:#fff;overflow:hidden;border-radius:2px;">
<div class="b" style="left:-0.5px;top:-0.5px;width:696.0px;height:143.6px;background:#f7f8fa;"></div>
<div class="b" style="left:-0.5px;top:47.0px;width:696.0px;height:1.0px;background:#eceef3;"></div>
<div class="b" style="left:-0.5px;top:94.8px;width:696.0px;height:1.0px;background:#eceef3;"></div>
<svg class="b" style="left:8.9px;top:14.9px;width:16.4px;height:16.4px;" viewBox="0 0 16.4 16.4"><rect x="1" y="1" width="11.4" height="11" rx="1.2" fill="none" stroke="#5e6278" stroke-width="1.5" opacity=".72"/><rect x="4.3" y="4" width="11.2" height="11.3" rx="1.3" fill="#f7f8fa" stroke="#5e6278" stroke-width="1.7"/><path d="M7 7.1h5.8M7 11.7h5.8" stroke="#5e6278" stroke-width="1.3" opacity=".5" fill="none"/></svg>
<span class="t " style="left:37.1px;top:16.1px;font-size:13.4px;line-height:13.4px;color:#676b82;letter-spacing:0.45px;-webkit-text-stroke:0.4px #676b82;">Respond Violation Escalation</span>
<svg class="b" style="left:8.9px;top:63.1px;width:16.4px;height:16.4px;" viewBox="0 0 16.4 16.4"><rect x="1" y="1" width="11.4" height="11" rx="1.2" fill="none" stroke="#5e6278" stroke-width="1.5" opacity=".72"/><rect x="4.3" y="4" width="11.2" height="11.3" rx="1.3" fill="#f7f8fa" stroke="#5e6278" stroke-width="1.7"/><path d="M7 7.1h5.8M7 11.7h5.8" stroke="#5e6278" stroke-width="1.3" opacity=".5" fill="none"/></svg>
<span class="t " style="left:37.1px;top:64.3px;font-size:13.4px;line-height:13.4px;color:#676b82;letter-spacing:0.41px;-webkit-text-stroke:0.4px #676b82;">Resolve Violation Escalation</span>
<svg class="b" style="left:8.9px;top:111.4px;width:16.4px;height:16.4px;" viewBox="0 0 16.4 16.4"><rect x="1" y="1" width="11.4" height="11" rx="1.2" fill="none" stroke="#5d78ff" stroke-width="1.5" opacity=".72"/><rect x="4.3" y="4" width="11.2" height="11.3" rx="1.3" fill="#f7f8fa" stroke="#5d78ff" stroke-width="1.7"/><path d="M7 7.1h5.8M7 11.7h5.8" stroke="#5d78ff" stroke-width="1.3" opacity=".5" fill="none"/></svg>
<span class="t " style="left:37.1px;top:112.6px;font-size:13.4px;line-height:13.4px;color:#5d78ff;letter-spacing:0.27px;-webkit-text-stroke:0.4px #5d78ff;">SLA Condition</span>
<svg class="b" style="left:678.0px;top:17.0px;width:7.0px;height:11.0px;" viewBox="0 0 7 11"><path d="M1.2 1 5.8 5.5 1.2 10" fill="none" stroke="#9a9cae" stroke-width="1.2"/></svg>
<svg class="b" style="left:678.0px;top:65.5px;width:7.0px;height:11.0px;" viewBox="0 0 7 11"><path d="M1.2 1 5.8 5.5 1.2 10" fill="none" stroke="#9a9cae" stroke-width="1.2"/></svg>
<svg class="b" style="left:674.5px;top:115.6px;width:12.5px;height:7.8px;" viewBox="0 0 12.50 7.78"><path d="M1 1 6.25 6.78 11.50 1" fill="none" stroke="#8fa2ff" stroke-width="1.2" stroke-linecap="round" stroke-linejoin="round"/></svg>
<div class="b" style="left:12.1px;top:161.8px;width:672.4px;height:106.9px;background:#eeeeee;border:1px solid #d9d9d4;border-radius:4px;"></div>
<div class="b" style="left:27.5px;top:203.5px;width:1.0px;height:34.0px;background:#a9a9a9;"></div>
<div class="b" style="left:27.5px;top:237.0px;width:9.0px;height:1.0px;background:#a9a9a9;"></div>
<div class="b" style="left:22.0px;top:171.5px;width:48.8px;height:33.2px;background:#93a2f3;"></div>
<span class="t " style="left:34.3px;top:182.8px;font-size:11.6px;line-height:11.6px;color:#fff;letter-spacing:-0.14px;-webkit-text-stroke:0.35px #fff;">AND</span>
<span class="t " style="left:82.5px;top:182.8px;font-size:11.6px;line-height:11.6px;color:#a9acb8;letter-spacing:-1.49px;">OR</span>
<span class="t " style="left:522.0px;top:182.0px;font-size:12.2px;line-height:12.2px;color:#5d6fe0;letter-spacing:0.44px;">Add rule</span>
<span class="t " style="left:600.5px;top:182.0px;font-size:12.2px;line-height:12.2px;color:#5d6fe0;letter-spacing:0.59px;">Add group</span>
<div class="b" style="left:36.2px;top:214.7px;width:637.3px;height:43.4px;background:#fcfcfc;border-radius:3px;"></div>
<div class="b" style="left:40.5px;top:219.1px;width:178.0px;height:34.4px;background:#fff;border:1px solid #e2e5ec;border-radius:3px;"></div>
<span class="t " style="left:57.1px;top:229.9px;font-size:12.2px;line-height:12.2px;color:#5e6278;letter-spacing:2.55px;">------</span>
<svg class="b" style="left:201.5px;top:232.7px;width:11.4px;height:7.2px;" viewBox="0 0 11.40 7.17"><path d="M1 1 5.70 6.17 10.40 1" fill="none" stroke="#3f4254" stroke-width="1.8" stroke-linecap="round" stroke-linejoin="round"/></svg>
<span class="t " style="left:619.5px;top:230.5px;font-size:12.2px;line-height:12.2px;color:#5d6fe0;letter-spacing:0.35px;">Delete</span>
</div>
</div>
</body></html>
